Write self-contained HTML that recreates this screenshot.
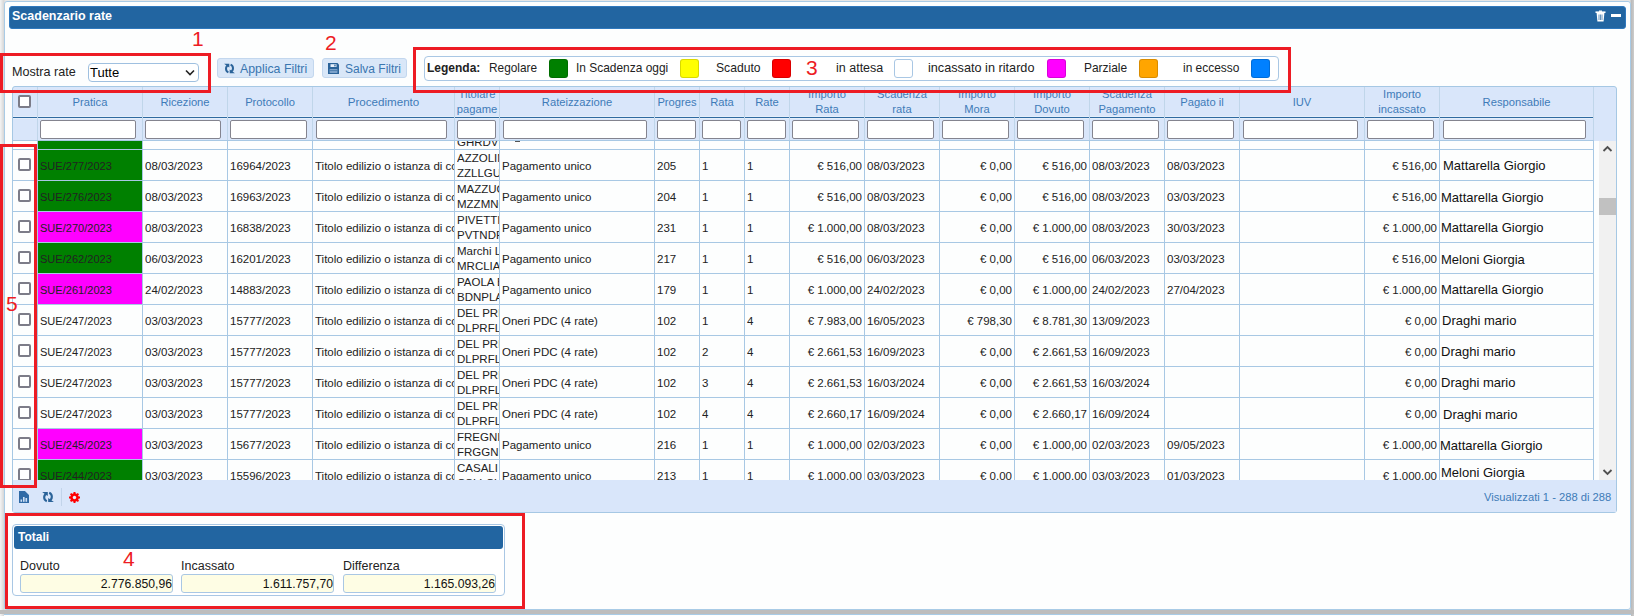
<!DOCTYPE html><html><head><meta charset="utf-8"><style>
*{box-sizing:border-box;margin:0;padding:0}
html,body{width:1634px;height:616px;overflow:hidden;background:linear-gradient(to right,#f4f4f4 0,#d6d6d6 4px,#e6e6e6 5px,#e6e6e6 1630px,#b8b8b8 1631px,#cdcdcd 1634px);font-family:"Liberation Sans",sans-serif;color:#222}
.a{position:absolute}
.panel{left:4px;top:1px;width:1627px;height:609px;background:#fdfefe;border:1px solid #a9cbe6;border-radius:3px}
.bar{left:9px;top:6px;width:1617px;height:23px;background:#2265a1;border-radius:3px;border:1px solid #2f78bd}
.bartitle{left:12px;top:8px;color:#fff;font-weight:bold;font-size:12.5px;line-height:16px}
.btn{height:20px;background:#d9e7f8;border:1px solid #c3d7ee;border-radius:3px;color:#3a76b0;font-size:12px;line-height:18px}
.legend{left:424px;top:56px;width:855px;height:25px;border:1px solid #a9c7e4;border-radius:4px;background:#fff}
.lt{font-size:12px;line-height:14px;top:61px;color:#222}
.sq{top:59px;width:19px;height:19px;border-radius:3px;border:1px solid rgba(0,0,0,.15)}
.grid{left:12px;top:86px;width:1605px;height:427px;border:1px solid #a6c8e4;border-radius:3px;background:#d9e6fa;overflow:hidden}
.hdr{top:86px;height:32px;background:#d9e6fa}
.ht{color:#3e7bb8;font-size:11.2px;line-height:14.5px;text-align:center;overflow:hidden}
.vsep{width:1px;background:#c0d6ea}
.fin{top:120px;height:19px;background:#fff;border:1px solid #84848f;border-radius:2px}
.body{left:13px;top:141px;width:1603px;height:339px;background:#fdfefe;overflow:hidden}
.rl{height:1px;background:#a8c8e4;left:0;width:1581px}
.cl{width:1px;background:#a8c8e4;top:0;height:339px}
.c{font-size:11.5px;line-height:14px;white-space:nowrap;overflow:hidden;color:#222}
.cb{width:13px;height:13px;border:2px solid #7c7c88;border-radius:2px;background:#fff}
.red{border:3px solid #ed1c24}
.rn{color:#ed1c24;font-size:21px;line-height:21px}
.pager{left:13px;top:480px;width:1603px;height:32px;background:#d9e6fa}
</style></head><body>
<div class="a panel"></div>
<div class="a bar"></div><div class="a bartitle">Scadenzario rate</div>
<div class="a" style="left:12px;top:65px;font-size:12.6px;line-height:14px;color:#222">Mostra rate</div>
<div class="a" style="left:88px;top:63px;width:111px;height:19px;border:1px solid #9fc0e0;border-radius:4px;background:#fff"></div>
<div class="a" style="left:90px;top:65px;font-size:13px;line-height:15px;color:#000">Tutte</div>
<svg class="a" style="left:185px;top:69px" width="10" height="8" viewBox="0 0 10 8"><path d="M1 1.5 L5 5.5 L9 1.5" fill="none" stroke="#222" stroke-width="1.6"/></svg>
<div class="a btn" style="left:217px;top:58px;width:97px"></div>
<div class="a btn" style="left:322px;top:58px;width:85px"></div>
<div class="a" style="left:240px;top:61px;font-size:12.35px;line-height:16px;color:#3a76b0">Applica Filtri</div>
<div class="a" style="left:345px;top:61px;font-size:12px;line-height:16px;color:#3a76b0">Salva Filtri</div>
<svg class="a" style="left:224px;top:63px" width="11" height="11" viewBox="0 0 11 11"><path d="M4.4 2.2 A3.9 3.9 0 0 0 4.4 9.4" fill="none" stroke="#2a6399" stroke-width="2"/><path d="M0.1 0.8 H5.3 V4.6 Z" fill="#2a6399"/><path d="M6.6 1.6 A3.9 3.9 0 0 1 6.6 8.8" fill="none" stroke="#2a6399" stroke-width="2"/><path d="M10.9 10.2 H5.7 V6.4 Z" fill="#2a6399"/></svg>
<svg class="a" style="left:328px;top:63px" width="11" height="11" viewBox="0 0 11 11"><path d="M0 0 H9.5 L11 1.5 V11 H0 Z" fill="#2a6399"/><rect x="2.5" y="1.2" width="6" height="2.8" fill="#e8f0fa"/><rect x="6.3" y="1.6" width="1.3" height="1.8" fill="#2a6399"/><rect x="1.6" y="6.2" width="7.8" height="3.6" fill="#8fb1d6"/><rect x="1.6" y="7.4" width="7.8" height="0.8" fill="#2a6399"/></svg>
<div class="a legend"></div>
<div class="a lt" style="left:427px;font-size:12px"><b>Legenda:</b></div>
<div class="a lt" style="left:489px;font-size:11.85px">Regolare</div>
<div class="a lt" style="left:576px;font-size:11.95px">In Scadenza oggi</div>
<div class="a lt" style="left:716px;font-size:12.15px">Scaduto</div>
<div class="a lt" style="left:836px;font-size:12.5px">in attesa</div>
<div class="a lt" style="left:928px;font-size:12.7px">incassato in ritardo</div>
<div class="a lt" style="left:1084px;font-size:11.95px">Parziale</div>
<div class="a lt" style="left:1183px;font-size:11.95px">in eccesso</div>
<div class="a sq" style="left:549px;background:#008000"></div>
<div class="a sq" style="left:680px;background:#ffff00"></div>
<div class="a sq" style="left:772px;background:#ff0000"></div>
<div class="a sq" style="left:894px;background:#ffffff;border-color:#a9c7e4"></div>
<div class="a sq" style="left:1047px;background:#ff00ff"></div>
<div class="a sq" style="left:1139px;background:#ffa500"></div>
<div class="a sq" style="left:1251px;background:#0080ff"></div>
<div class="a grid"></div>
<div class="a" style="left:13px;top:116px;width:1581px;height:3px;background:#e4eefb"></div>
<div class="a" style="left:13px;top:117px;width:1581px;height:1px;background:#2f6aa0"></div>
<div class="a vsep" style="left:37px;top:87px;height:53px"></div>
<div class="a vsep" style="left:142px;top:87px;height:53px"></div>
<div class="a vsep" style="left:227px;top:87px;height:53px"></div>
<div class="a vsep" style="left:312px;top:87px;height:53px"></div>
<div class="a vsep" style="left:454px;top:87px;height:53px"></div>
<div class="a vsep" style="left:499px;top:87px;height:53px"></div>
<div class="a vsep" style="left:654px;top:87px;height:53px"></div>
<div class="a vsep" style="left:699px;top:87px;height:53px"></div>
<div class="a vsep" style="left:744px;top:87px;height:53px"></div>
<div class="a vsep" style="left:789px;top:87px;height:53px"></div>
<div class="a vsep" style="left:864px;top:87px;height:53px"></div>
<div class="a vsep" style="left:939px;top:87px;height:53px"></div>
<div class="a vsep" style="left:1014px;top:87px;height:53px"></div>
<div class="a vsep" style="left:1089px;top:87px;height:53px"></div>
<div class="a vsep" style="left:1164px;top:87px;height:53px"></div>
<div class="a vsep" style="left:1239px;top:87px;height:53px"></div>
<div class="a vsep" style="left:1364px;top:87px;height:53px"></div>
<div class="a vsep" style="left:1439px;top:87px;height:53px"></div>
<div class="a vsep" style="left:1593px;top:87px;height:53px"></div>
<div class="a ht" style="left:38px;width:104px;top:95px">Pratica</div>
<div class="a ht" style="left:143px;width:84px;top:95px">Ricezione</div>
<div class="a ht" style="left:228px;width:84px;top:95px">Protocollo</div>
<div class="a ht" style="left:313px;width:141px;top:95px;font-size:11.6px">Procedimento</div>
<div class="a ht" style="left:455px;width:44px;top:87px;height:30px"><div style="margin-top:0px">Titolare<br>pagame</div></div>
<div class="a ht" style="left:500px;width:154px;top:95px">Rateizzazione</div>
<div class="a ht" style="left:655px;width:44px;top:95px">Progres</div>
<div class="a ht" style="left:700px;width:44px;top:95px">Rata</div>
<div class="a ht" style="left:745px;width:44px;top:95px">Rate</div>
<div class="a ht" style="left:790px;width:74px;top:87px;height:30px"><div style="margin-top:0px">Importo<br>Rata</div></div>
<div class="a ht" style="left:865px;width:74px;top:87px;height:30px"><div style="margin-top:0px">Scadenza<br>rata</div></div>
<div class="a ht" style="left:940px;width:74px;top:87px;height:30px"><div style="margin-top:0px">Importo<br>Mora</div></div>
<div class="a ht" style="left:1015px;width:74px;top:87px;height:30px"><div style="margin-top:0px">Importo<br>Dovuto</div></div>
<div class="a ht" style="left:1090px;width:74px;top:87px;height:30px"><div style="margin-top:0px">Scadenza<br>Pagamento</div></div>
<div class="a ht" style="left:1165px;width:74px;top:95px">Pagato il</div>
<div class="a ht" style="left:1240px;width:124px;top:95px">IUV</div>
<div class="a ht" style="left:1365px;width:74px;top:87px;height:30px"><div style="margin-top:0px">Importo<br>incassato</div></div>
<div class="a ht" style="left:1440px;width:153px;top:95px">Responsabile</div>
<div class="a cb" style="left:18px;top:95px"></div>
<div class="a fin" style="left:40px;width:96px"></div>
<div class="a fin" style="left:145px;width:76px"></div>
<div class="a fin" style="left:230px;width:77px"></div>
<div class="a fin" style="left:316px;width:131px"></div>
<div class="a fin" style="left:457px;width:39px"></div>
<div class="a fin" style="left:503px;width:144px"></div>
<div class="a fin" style="left:657px;width:39px"></div>
<div class="a fin" style="left:702px;width:39px"></div>
<div class="a fin" style="left:747px;width:39px"></div>
<div class="a fin" style="left:792px;width:67px"></div>
<div class="a fin" style="left:867px;width:67px"></div>
<div class="a fin" style="left:942px;width:67px"></div>
<div class="a fin" style="left:1017px;width:67px"></div>
<div class="a fin" style="left:1092px;width:67px"></div>
<div class="a fin" style="left:1167px;width:67px"></div>
<div class="a fin" style="left:1243px;width:115px"></div>
<div class="a fin" style="left:1367px;width:67px"></div>
<div class="a fin" style="left:1443px;width:143px"></div>
<div class="a" style="left:13px;top:140px;width:1581px;height:1px;background:#a8c8e4"></div>
<div class="a body">
<div class="a" style="left:1586px;top:0;width:17px;height:339px;background:#f1f1f1"></div>
<div class="a" style="left:1586px;top:57px;width:17px;height:17px;background:#c1c1c1"></div>
<svg class="a" style="left:1589px;top:4px" width="11" height="8" viewBox="0 0 11 8"><path d="M1.5 6 L5.5 2 L9.5 6" fill="none" stroke="#505050" stroke-width="1.8"/></svg>
<svg class="a" style="left:1589px;top:327px" width="11" height="8" viewBox="0 0 11 8"><path d="M1.5 2 L5.5 6 L9.5 2" fill="none" stroke="#505050" stroke-width="1.8"/></svg>
<div class="a" style="left:25px;top:-22px;width:104px;height:30px;background:#008000"></div>
<div class="a rl" style="top:8px"></div>
<div class="a c" style="left:444px;width:42px;top:-21px;line-height:14.6px">?<br>GHRDVL</div>
<div class="a c" style="left:489px;width:152px;top:-13px">Pagamento unico</div>
<div class="a" style="left:25px;top:9px;width:104px;height:30px;background:#008000"></div>
<div class="a rl" style="top:39px"></div>
<div class="a cb" style="left:5px;top:17px"></div>
<div class="a c" style="left:27px;width:102px;top:18px;font-size:11.05px">SUE/277/2023</div>
<div class="a c" style="left:132px;width:82px;top:18px">08/03/2023</div>
<div class="a c" style="left:217px;width:82px;top:18px">16964/2023</div>
<div class="a c" style="left:302px;width:139px;top:18px">Titolo edilizio o istanza di conformità</div>
<div class="a c" style="left:444px;width:42px;top:10px;line-height:14.6px">AZZOLIN<br>ZZLLGU5</div>
<div class="a c" style="left:489px;width:152px;top:18px">Pagamento unico</div>
<div class="a c" style="left:644px;width:42px;top:18px">205</div>
<div class="a c" style="left:689px;width:42px;top:18px">1</div>
<div class="a c" style="left:734px;width:42px;top:18px">1</div>
<div class="a c" style="left:777px;width:72px;top:18px;text-align:right">€ 516,00</div>
<div class="a c" style="left:854px;width:72px;top:18px">08/03/2023</div>
<div class="a c" style="left:927px;width:72px;top:18px;text-align:right">€ 0,00</div>
<div class="a c" style="left:1002px;width:72px;top:18px;text-align:right">€ 516,00</div>
<div class="a c" style="left:1079px;width:72px;top:18px">08/03/2023</div>
<div class="a c" style="left:1154px;width:72px;top:18px">08/03/2023</div>
<div class="a c" style="left:1352px;width:72px;top:18px;text-align:right">€ 516,00</div>
<div class="a c" style="left:1430px;width:150px;top:18px;font-size:13px;color:#111">Mattarella Giorgio</div>
<div class="a" style="left:25px;top:40px;width:104px;height:30px;background:#008000"></div>
<div class="a rl" style="top:70px"></div>
<div class="a cb" style="left:5px;top:48px"></div>
<div class="a c" style="left:27px;width:102px;top:49px;font-size:11.05px">SUE/276/2023</div>
<div class="a c" style="left:132px;width:82px;top:49px">08/03/2023</div>
<div class="a c" style="left:217px;width:82px;top:49px">16963/2023</div>
<div class="a c" style="left:302px;width:139px;top:49px">Titolo edilizio o istanza di conformità</div>
<div class="a c" style="left:444px;width:42px;top:41px;line-height:14.6px">MAZZUCC<br>MZZMNC</div>
<div class="a c" style="left:489px;width:152px;top:49px">Pagamento unico</div>
<div class="a c" style="left:644px;width:42px;top:49px">204</div>
<div class="a c" style="left:689px;width:42px;top:49px">1</div>
<div class="a c" style="left:734px;width:42px;top:49px">1</div>
<div class="a c" style="left:777px;width:72px;top:49px;text-align:right">€ 516,00</div>
<div class="a c" style="left:854px;width:72px;top:49px">08/03/2023</div>
<div class="a c" style="left:927px;width:72px;top:49px;text-align:right">€ 0,00</div>
<div class="a c" style="left:1002px;width:72px;top:49px;text-align:right">€ 516,00</div>
<div class="a c" style="left:1079px;width:72px;top:49px">08/03/2023</div>
<div class="a c" style="left:1154px;width:72px;top:49px">03/03/2023</div>
<div class="a c" style="left:1352px;width:72px;top:49px;text-align:right">€ 516,00</div>
<div class="a c" style="left:1428px;width:150px;top:50px;font-size:13px;color:#111">Mattarella Giorgio</div>
<div class="a" style="left:25px;top:71px;width:104px;height:30px;background:#ff00ff"></div>
<div class="a rl" style="top:101px"></div>
<div class="a cb" style="left:5px;top:79px"></div>
<div class="a c" style="left:27px;width:102px;top:80px;font-size:11.05px">SUE/270/2023</div>
<div class="a c" style="left:132px;width:82px;top:80px">08/03/2023</div>
<div class="a c" style="left:217px;width:82px;top:80px">16838/2023</div>
<div class="a c" style="left:302px;width:139px;top:80px">Titolo edilizio o istanza di conformità</div>
<div class="a c" style="left:444px;width:42px;top:72px;line-height:14.6px">PIVETTI A<br>PVTNDR</div>
<div class="a c" style="left:489px;width:152px;top:80px">Pagamento unico</div>
<div class="a c" style="left:644px;width:42px;top:80px">231</div>
<div class="a c" style="left:689px;width:42px;top:80px">1</div>
<div class="a c" style="left:734px;width:42px;top:80px">1</div>
<div class="a c" style="left:777px;width:72px;top:80px;text-align:right">€ 1.000,00</div>
<div class="a c" style="left:854px;width:72px;top:80px">08/03/2023</div>
<div class="a c" style="left:927px;width:72px;top:80px;text-align:right">€ 0,00</div>
<div class="a c" style="left:1002px;width:72px;top:80px;text-align:right">€ 1.000,00</div>
<div class="a c" style="left:1079px;width:72px;top:80px">08/03/2023</div>
<div class="a c" style="left:1154px;width:72px;top:80px">30/03/2023</div>
<div class="a c" style="left:1352px;width:72px;top:80px;text-align:right">€ 1.000,00</div>
<div class="a c" style="left:1428px;width:150px;top:80px;font-size:13px;color:#111">Mattarella Giorgio</div>
<div class="a" style="left:25px;top:102px;width:104px;height:30px;background:#008000"></div>
<div class="a rl" style="top:132px"></div>
<div class="a cb" style="left:5px;top:110px"></div>
<div class="a c" style="left:27px;width:102px;top:111px;font-size:11.05px">SUE/262/2023</div>
<div class="a c" style="left:132px;width:82px;top:111px">06/03/2023</div>
<div class="a c" style="left:217px;width:82px;top:111px">16201/2023</div>
<div class="a c" style="left:302px;width:139px;top:111px">Titolo edilizio o istanza di conformità</div>
<div class="a c" style="left:444px;width:42px;top:103px;line-height:14.6px">Marchi L<br>MRCLIA4</div>
<div class="a c" style="left:489px;width:152px;top:111px">Pagamento unico</div>
<div class="a c" style="left:644px;width:42px;top:111px">217</div>
<div class="a c" style="left:689px;width:42px;top:111px">1</div>
<div class="a c" style="left:734px;width:42px;top:111px">1</div>
<div class="a c" style="left:777px;width:72px;top:111px;text-align:right">€ 516,00</div>
<div class="a c" style="left:854px;width:72px;top:111px">06/03/2023</div>
<div class="a c" style="left:927px;width:72px;top:111px;text-align:right">€ 0,00</div>
<div class="a c" style="left:1002px;width:72px;top:111px;text-align:right">€ 516,00</div>
<div class="a c" style="left:1079px;width:72px;top:111px">06/03/2023</div>
<div class="a c" style="left:1154px;width:72px;top:111px">03/03/2023</div>
<div class="a c" style="left:1352px;width:72px;top:111px;text-align:right">€ 516,00</div>
<div class="a c" style="left:1428px;width:150px;top:112px;font-size:13px;color:#111">Meloni Giorgia</div>
<div class="a" style="left:25px;top:133px;width:104px;height:30px;background:#ff00ff"></div>
<div class="a rl" style="top:163px"></div>
<div class="a cb" style="left:5px;top:141px"></div>
<div class="a c" style="left:27px;width:102px;top:142px;font-size:11.05px">SUE/261/2023</div>
<div class="a c" style="left:132px;width:82px;top:142px">24/02/2023</div>
<div class="a c" style="left:217px;width:82px;top:142px">14883/2023</div>
<div class="a c" style="left:302px;width:139px;top:142px">Titolo edilizio o istanza di conformità</div>
<div class="a c" style="left:444px;width:42px;top:134px;line-height:14.6px">PAOLA B<br>BDNPLA</div>
<div class="a c" style="left:489px;width:152px;top:142px">Pagamento unico</div>
<div class="a c" style="left:644px;width:42px;top:142px">179</div>
<div class="a c" style="left:689px;width:42px;top:142px">1</div>
<div class="a c" style="left:734px;width:42px;top:142px">1</div>
<div class="a c" style="left:777px;width:72px;top:142px;text-align:right">€ 1.000,00</div>
<div class="a c" style="left:854px;width:72px;top:142px">24/02/2023</div>
<div class="a c" style="left:927px;width:72px;top:142px;text-align:right">€ 0,00</div>
<div class="a c" style="left:1002px;width:72px;top:142px;text-align:right">€ 1.000,00</div>
<div class="a c" style="left:1079px;width:72px;top:142px">24/02/2023</div>
<div class="a c" style="left:1154px;width:72px;top:142px">27/04/2023</div>
<div class="a c" style="left:1352px;width:72px;top:142px;text-align:right">€ 1.000,00</div>
<div class="a c" style="left:1428px;width:150px;top:142px;font-size:13px;color:#111">Mattarella Giorgio</div>
<div class="a rl" style="top:194px"></div>
<div class="a cb" style="left:5px;top:172px"></div>
<div class="a c" style="left:27px;width:102px;top:173px;font-size:11.05px">SUE/247/2023</div>
<div class="a c" style="left:132px;width:82px;top:173px">03/03/2023</div>
<div class="a c" style="left:217px;width:82px;top:173px">15777/2023</div>
<div class="a c" style="left:302px;width:139px;top:173px">Titolo edilizio o istanza di conformità</div>
<div class="a c" style="left:444px;width:42px;top:165px;line-height:14.6px">DEL PRIO<br>DLPRFL7</div>
<div class="a c" style="left:489px;width:152px;top:173px">Oneri PDC (4 rate)</div>
<div class="a c" style="left:644px;width:42px;top:173px">102</div>
<div class="a c" style="left:689px;width:42px;top:173px">1</div>
<div class="a c" style="left:734px;width:42px;top:173px">4</div>
<div class="a c" style="left:777px;width:72px;top:173px;text-align:right">€ 7.983,00</div>
<div class="a c" style="left:854px;width:72px;top:173px">16/05/2023</div>
<div class="a c" style="left:927px;width:72px;top:173px;text-align:right">€ 798,30</div>
<div class="a c" style="left:1002px;width:72px;top:173px;text-align:right">€ 8.781,30</div>
<div class="a c" style="left:1079px;width:72px;top:173px">13/09/2023</div>
<div class="a c" style="left:1352px;width:72px;top:173px;text-align:right">€ 0,00</div>
<div class="a c" style="left:1429px;width:150px;top:173px;font-size:13px;color:#111">Draghi mario</div>
<div class="a rl" style="top:225px"></div>
<div class="a cb" style="left:5px;top:203px"></div>
<div class="a c" style="left:27px;width:102px;top:204px;font-size:11.05px">SUE/247/2023</div>
<div class="a c" style="left:132px;width:82px;top:204px">03/03/2023</div>
<div class="a c" style="left:217px;width:82px;top:204px">15777/2023</div>
<div class="a c" style="left:302px;width:139px;top:204px">Titolo edilizio o istanza di conformità</div>
<div class="a c" style="left:444px;width:42px;top:196px;line-height:14.6px">DEL PRIO<br>DLPRFL7</div>
<div class="a c" style="left:489px;width:152px;top:204px">Oneri PDC (4 rate)</div>
<div class="a c" style="left:644px;width:42px;top:204px">102</div>
<div class="a c" style="left:689px;width:42px;top:204px">2</div>
<div class="a c" style="left:734px;width:42px;top:204px">4</div>
<div class="a c" style="left:777px;width:72px;top:204px;text-align:right">€ 2.661,53</div>
<div class="a c" style="left:854px;width:72px;top:204px">16/09/2023</div>
<div class="a c" style="left:927px;width:72px;top:204px;text-align:right">€ 0,00</div>
<div class="a c" style="left:1002px;width:72px;top:204px;text-align:right">€ 2.661,53</div>
<div class="a c" style="left:1079px;width:72px;top:204px">16/09/2023</div>
<div class="a c" style="left:1352px;width:72px;top:204px;text-align:right">€ 0,00</div>
<div class="a c" style="left:1428px;width:150px;top:204px;font-size:13px;color:#111">Draghi mario</div>
<div class="a rl" style="top:256px"></div>
<div class="a cb" style="left:5px;top:234px"></div>
<div class="a c" style="left:27px;width:102px;top:235px;font-size:11.05px">SUE/247/2023</div>
<div class="a c" style="left:132px;width:82px;top:235px">03/03/2023</div>
<div class="a c" style="left:217px;width:82px;top:235px">15777/2023</div>
<div class="a c" style="left:302px;width:139px;top:235px">Titolo edilizio o istanza di conformità</div>
<div class="a c" style="left:444px;width:42px;top:227px;line-height:14.6px">DEL PRIO<br>DLPRFL7</div>
<div class="a c" style="left:489px;width:152px;top:235px">Oneri PDC (4 rate)</div>
<div class="a c" style="left:644px;width:42px;top:235px">102</div>
<div class="a c" style="left:689px;width:42px;top:235px">3</div>
<div class="a c" style="left:734px;width:42px;top:235px">4</div>
<div class="a c" style="left:777px;width:72px;top:235px;text-align:right">€ 2.661,53</div>
<div class="a c" style="left:854px;width:72px;top:235px">16/03/2024</div>
<div class="a c" style="left:927px;width:72px;top:235px;text-align:right">€ 0,00</div>
<div class="a c" style="left:1002px;width:72px;top:235px;text-align:right">€ 2.661,53</div>
<div class="a c" style="left:1079px;width:72px;top:235px">16/03/2024</div>
<div class="a c" style="left:1352px;width:72px;top:235px;text-align:right">€ 0,00</div>
<div class="a c" style="left:1428px;width:150px;top:235px;font-size:13px;color:#111">Draghi mario</div>
<div class="a rl" style="top:287px"></div>
<div class="a cb" style="left:5px;top:265px"></div>
<div class="a c" style="left:27px;width:102px;top:266px;font-size:11.05px">SUE/247/2023</div>
<div class="a c" style="left:132px;width:82px;top:266px">03/03/2023</div>
<div class="a c" style="left:217px;width:82px;top:266px">15777/2023</div>
<div class="a c" style="left:302px;width:139px;top:266px">Titolo edilizio o istanza di conformità</div>
<div class="a c" style="left:444px;width:42px;top:258px;line-height:14.6px">DEL PRIO<br>DLPRFL7</div>
<div class="a c" style="left:489px;width:152px;top:266px">Oneri PDC (4 rate)</div>
<div class="a c" style="left:644px;width:42px;top:266px">102</div>
<div class="a c" style="left:689px;width:42px;top:266px">4</div>
<div class="a c" style="left:734px;width:42px;top:266px">4</div>
<div class="a c" style="left:777px;width:72px;top:266px;text-align:right">€ 2.660,17</div>
<div class="a c" style="left:854px;width:72px;top:266px">16/09/2024</div>
<div class="a c" style="left:927px;width:72px;top:266px;text-align:right">€ 0,00</div>
<div class="a c" style="left:1002px;width:72px;top:266px;text-align:right">€ 2.660,17</div>
<div class="a c" style="left:1079px;width:72px;top:266px">16/09/2024</div>
<div class="a c" style="left:1352px;width:72px;top:266px;text-align:right">€ 0,00</div>
<div class="a c" style="left:1430px;width:150px;top:267px;font-size:13px;color:#111">Draghi mario</div>
<div class="a" style="left:25px;top:288px;width:104px;height:30px;background:#ff00ff"></div>
<div class="a rl" style="top:318px"></div>
<div class="a cb" style="left:5px;top:296px"></div>
<div class="a c" style="left:27px;width:102px;top:297px;font-size:11.05px">SUE/245/2023</div>
<div class="a c" style="left:132px;width:82px;top:297px">03/03/2023</div>
<div class="a c" style="left:217px;width:82px;top:297px">15677/2023</div>
<div class="a c" style="left:302px;width:139px;top:297px">Titolo edilizio o istanza di conformità</div>
<div class="a c" style="left:444px;width:42px;top:289px;line-height:14.6px">FREGNI G<br>FRGGNN</div>
<div class="a c" style="left:489px;width:152px;top:297px">Pagamento unico</div>
<div class="a c" style="left:644px;width:42px;top:297px">216</div>
<div class="a c" style="left:689px;width:42px;top:297px">1</div>
<div class="a c" style="left:734px;width:42px;top:297px">1</div>
<div class="a c" style="left:777px;width:72px;top:297px;text-align:right">€ 1.000,00</div>
<div class="a c" style="left:854px;width:72px;top:297px">02/03/2023</div>
<div class="a c" style="left:927px;width:72px;top:297px;text-align:right">€ 0,00</div>
<div class="a c" style="left:1002px;width:72px;top:297px;text-align:right">€ 1.000,00</div>
<div class="a c" style="left:1079px;width:72px;top:297px">02/03/2023</div>
<div class="a c" style="left:1154px;width:72px;top:297px">09/05/2023</div>
<div class="a c" style="left:1352px;width:72px;top:297px;text-align:right">€ 1.000,00</div>
<div class="a c" style="left:1427px;width:150px;top:298px;font-size:13px;color:#111">Mattarella Giorgio</div>
<div class="a" style="left:25px;top:319px;width:104px;height:30px;background:#008000"></div>
<div class="a rl" style="top:349px"></div>
<div class="a cb" style="left:5px;top:327px"></div>
<div class="a c" style="left:27px;width:102px;top:328px;font-size:11.05px">SUE/244/2023</div>
<div class="a c" style="left:132px;width:82px;top:328px">03/03/2023</div>
<div class="a c" style="left:217px;width:82px;top:328px">15596/2023</div>
<div class="a c" style="left:302px;width:139px;top:328px">Titolo edilizio o istanza di conformità</div>
<div class="a c" style="left:444px;width:42px;top:320px;line-height:14.6px">CASALI L<br>CSLLCU</div>
<div class="a c" style="left:489px;width:152px;top:328px">Pagamento unico</div>
<div class="a c" style="left:644px;width:42px;top:328px">213</div>
<div class="a c" style="left:689px;width:42px;top:328px">1</div>
<div class="a c" style="left:734px;width:42px;top:328px">1</div>
<div class="a c" style="left:777px;width:72px;top:328px;text-align:right">€ 1.000,00</div>
<div class="a c" style="left:854px;width:72px;top:328px">03/03/2023</div>
<div class="a c" style="left:927px;width:72px;top:328px;text-align:right">€ 0,00</div>
<div class="a c" style="left:1002px;width:72px;top:328px;text-align:right">€ 1.000,00</div>
<div class="a c" style="left:1079px;width:72px;top:328px">03/03/2023</div>
<div class="a c" style="left:1154px;width:72px;top:328px">01/03/2023</div>
<div class="a c" style="left:1352px;width:72px;top:328px;text-align:right">€ 1.000,00</div>
<div class="a c" style="left:1428px;width:150px;top:325px;font-size:13px;color:#111">Meloni Giorgia</div>
<div class="a cl" style="left:24px"></div>
<div class="a cl" style="left:129px"></div>
<div class="a cl" style="left:214px"></div>
<div class="a cl" style="left:299px"></div>
<div class="a cl" style="left:441px"></div>
<div class="a cl" style="left:486px"></div>
<div class="a cl" style="left:641px"></div>
<div class="a cl" style="left:686px"></div>
<div class="a cl" style="left:731px"></div>
<div class="a cl" style="left:776px"></div>
<div class="a cl" style="left:851px"></div>
<div class="a cl" style="left:926px"></div>
<div class="a cl" style="left:1001px"></div>
<div class="a cl" style="left:1076px"></div>
<div class="a cl" style="left:1151px"></div>
<div class="a cl" style="left:1226px"></div>
<div class="a cl" style="left:1351px"></div>
<div class="a cl" style="left:1426px"></div>
<div class="a cl" style="left:1580px"></div>
<div class="a" style="left:502px;top:0px;width:5px;height:1px;background:#555"></div>
</div>
<div class="a pager"></div>
<div class="a" style="left:1484px;top:491px;font-size:11.2px;line-height:13px;color:#3e7bb8">Visualizzati 1 - 288 di 288</div>
<svg class="a" style="left:18px;top:491px" width="12" height="12" viewBox="0 0 12 12"><path d="M1 0 H7 L11 4 V12 H1 Z" fill="#2f6aa6"/><path d="M7.5 0 H11 V3.5 Z" fill="#d9e6fa"/><rect x="2.5" y="8.5" width="1.6" height="2.3" fill="#cfe0f5"/><rect x="5" y="6" width="1.6" height="4.8" fill="#cfe0f5"/><rect x="7.5" y="7" width="1.6" height="3.8" fill="#cfe0f5"/></svg>
<svg class="a" style="left:42px;top:491px" width="12" height="12" viewBox="0 0 12 12"><path d="M4.8 2.4 A4.2 4.2 0 0 0 4.8 10.2" fill="none" stroke="#2a6399" stroke-width="2.1"/><path d="M0.1 0.9 H5.8 V5 Z" fill="#2a6399"/><path d="M7.2 1.8 A4.2 4.2 0 0 1 7.2 9.6" fill="none" stroke="#2a6399" stroke-width="2.1"/><path d="M11.9 11.1 H6.2 V7 Z" fill="#2a6399"/></svg>
<div class="a" style="left:61px;top:488px;width:1px;height:18px;background:#c2d4ea"></div>
<svg class="a" style="left:69px;top:492px" width="11" height="11" viewBox="0 0 11 11"><circle cx="5.5" cy="5.5" r="3.2" fill="none" stroke="#f00" stroke-width="2.2"/><g stroke="#f00" stroke-width="2"><line x1="5.5" y1="0" x2="5.5" y2="11"/><line x1="0" y1="5.5" x2="11" y2="5.5"/><line x1="1.6" y1="1.6" x2="9.4" y2="9.4"/><line x1="9.4" y1="1.6" x2="1.6" y2="9.4"/></g><circle cx="5.5" cy="5.5" r="1.7" fill="#e8f0fb"/></svg>
<div class="a" style="left:12px;top:524px;width:493px;height:72px;border:1px solid #a9c7e4;border-radius:4px;background:#fff"></div>
<div class="a" style="left:14px;top:526px;width:489px;height:23px;background:#2265a1;border-radius:3px"></div>
<div class="a" style="left:18px;top:530px;color:#fff;font-weight:bold;font-size:12px;line-height:14px">Totali</div>
<div class="a" style="left:20px;top:560px;font-size:12.5px;line-height:13px;color:#222">Dovuto</div>
<div class="a" style="left:20px;top:574px;width:153px;height:19px;border:1px solid #a9c7e4;border-radius:3px;background:#fefde4"></div>
<div class="a" style="left:20px;top:577px;width:152px;font-size:12.2px;line-height:15px;text-align:right;color:#111">2.776.850,96</div>
<div class="a" style="left:181px;top:560px;font-size:12.5px;line-height:13px;color:#222">Incassato</div>
<div class="a" style="left:181px;top:574px;width:153px;height:19px;border:1px solid #a9c7e4;border-radius:3px;background:#fefde4"></div>
<div class="a" style="left:181px;top:577px;width:152px;font-size:12.2px;line-height:15px;text-align:right;color:#111">1.611.757,70</div>
<div class="a" style="left:343px;top:560px;font-size:12.5px;line-height:13px;color:#222">Differenza</div>
<div class="a" style="left:343px;top:574px;width:153px;height:19px;border:1px solid #a9c7e4;border-radius:3px;background:#fefde4"></div>
<div class="a" style="left:343px;top:577px;width:152px;font-size:12.2px;line-height:15px;text-align:right;color:#111">1.165.093,26</div>
<svg class="a" style="left:1595px;top:10px" width="11" height="12" viewBox="0 0 11 12"><path d="M0.5 2.2 H10.5" stroke="#fff" stroke-width="1.6"/><path d="M4 1.2 H7" stroke="#fff" stroke-width="1.4"/><path d="M1.6 3 L2.4 11.5 H8.6 L9.4 3 Z" fill="#fff"/><path d="M4 4.5 V10 M5.5 4.5 V10 M7 4.5 V10" stroke="#2265a1" stroke-width="0.7"/></svg>
<div class="a" style="left:1611px;top:14px;width:10px;height:3px;background:#fff"></div>
<div class="a" style="left:0;top:610px;width:1634px;height:4px;background:#bdbdbd"></div>
<div class="a" style="left:4px;top:614px;width:1627px;height:4px;border-top:1px solid #a9cbe6;background:#fdfefe"></div>
<div class="a red" style="left:0;top:53px;width:211px;height:40px"></div>
<div class="a red" style="left:413px;top:47px;width:878px;height:46px"></div>
<div class="a red" style="left:5px;top:513px;width:520px;height:96px"></div>
<div class="a red" style="left:0;top:144px;width:37px;height:344px"></div>
<div class="a rn" style="left:192px;top:28px">1</div>
<div class="a rn" style="left:325px;top:32px">2</div>
<div class="a rn" style="left:806px;top:57px">3</div>
<div class="a rn" style="left:123px;top:548px">4</div>
<div class="a rn" style="left:6px;top:293px">5</div>
</body></html>
